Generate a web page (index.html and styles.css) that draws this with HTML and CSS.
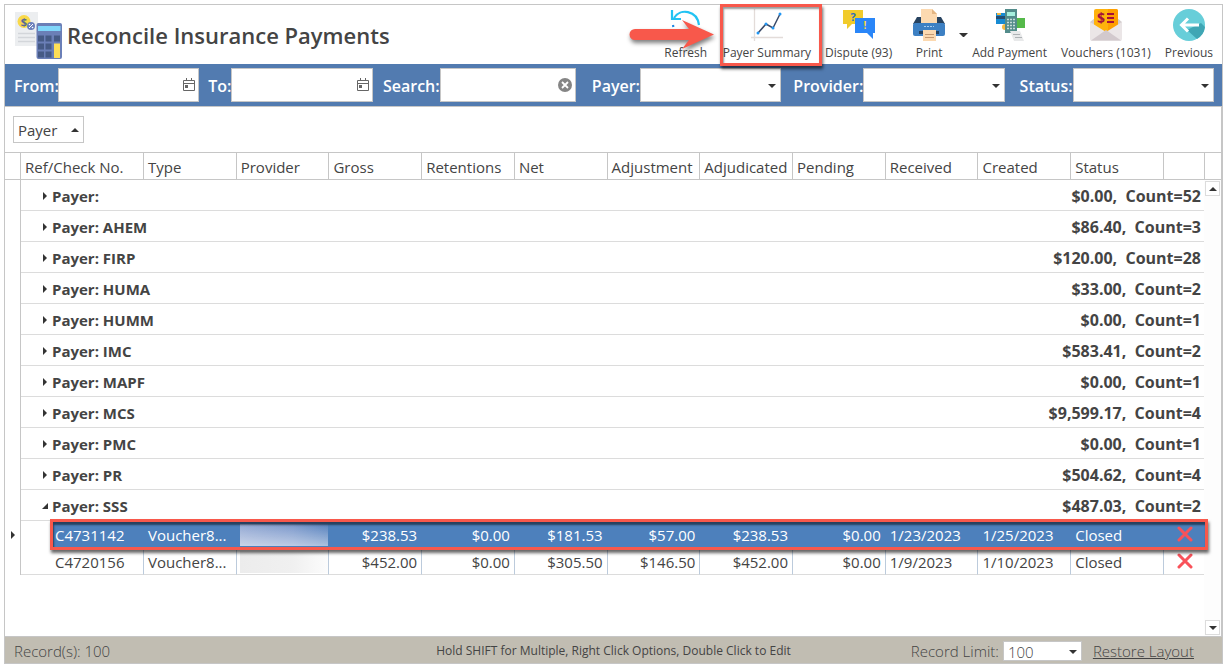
FILE: index.html
```
<!DOCTYPE html>
<html lang="en">
<head>
    <meta charset="UTF-8">
    <meta name="viewport" content="width=device-width, initial-scale=1.0">
    <title>Reconcile Insurance Payments</title>
    <link rel="stylesheet" href="styles.css">
</head>
<body>
    <div class="window">
        <header class="header">
            <svg class="title-icon" width="48" height="48" viewBox="0 0 48 48" aria-hidden="true">
                <rect x="1" y="1" width="23" height="34" fill="#eceef0"/>
                <path d="M4 22.500h17M4 26.500h17M4 30.500h17" stroke="#d3d6da" stroke-width="1.500"/>
                <circle cx="10" cy="10.500" r="6.500" fill="#f9d949"/>
                <text x="10" y="14.500" font-size="11" text-anchor="middle" class="glyph" fill="#5a6a96">$</text>
                <circle cx="17" cy="15" r="4" fill="#6c80ba"/>
                <path d="M15 17l4-4" stroke="#fff"/>
                <circle cx="15.500" cy="13.500" r="0.800" fill="#fff"/>
                <circle cx="18.500" cy="16.500" r="0.800" fill="#fff"/>
                <rect x="22.500" y="12" width="25.500" height="36" rx="2" fill="#6b7fb7"/>
                <rect x="24" y="15" width="22.500" height="5" fill="#80d6fa"/>
                <path d="M24 24.500h6v6h-6zM31.500 24.500h6v6h-6zM40 24.500h6v6h-6zM24 32.500h6v6h-6zM31.500 32.500h6v6h-6zM24 40.500h6v6h-6zM31.500 40.500h6v6h-6z" fill="#465a85"/>
                <rect x="40" y="32.500" width="6" height="14.500" fill="#ffdf57"/>
            </svg>
            <h1>Reconcile Insurance Payments</h1>

            <nav class="tools">
                <button type="button" class="tool">
                    <svg width="32" height="32" viewBox="0 0 32 32" aria-hidden="true">
                        <path d="M4 9C10-1 27 1 29 16" fill="none" stroke="#22c3f3" stroke-width="2.200"/>
                        <path d="M2 1v9h9" fill="none" stroke="#22c3f3" stroke-width="2.200"/>
                        <path d="M3 16C5 31 22 33 28 23" fill="none" stroke="#1e88e5" stroke-width="2.200" stroke-dasharray="2 3"/>
                    </svg>
                    <span>Refresh</span>
                    <svg class="arrow-mark" width="90" height="34" viewBox="0 0 90 34" aria-hidden="true">
                        <path d="M7 11H61L54 2L86 16.500L54 31L61 22H7A5.500 5.500 0 0 1 7 11Z" fill="#f8584b"/>
                    </svg>
                </button>
                <button type="button" class="tool marked">
                    <svg width="32" height="32" viewBox="0 0 32 32" aria-hidden="true">
                        <path d="M3.500 0v32M0 28.500h32" stroke="#e3dcd9" stroke-width="1.300"/>
                        <path d="M7 24l8-9 7 4 7-14" fill="none" stroke="#3a4a68" stroke-width="1.500"/>
                        <g fill="#2196f3"><circle cx="7" cy="24" r="1.500"/><circle cx="15" cy="15" r="1.500"/><circle cx="22" cy="19" r="1.500"/><circle cx="29" cy="5" r="1.500"/></g>
                    </svg>
                    <span>Payer Summary</span>
                </button>
                <button type="button" class="tool">
                    <svg width="32" height="32" viewBox="0 0 32 32" aria-hidden="true">
                        <path d="M0 1h20v14H9l-5 5v-5H0z" fill="#f1cb2b"/>
                        <text x="10" y="12" font-size="11" text-anchor="middle" class="glyph" fill="#2f6fb5">?</text>
                        <path d="M12 9h20v15h-2v6l-6-6H12z" fill="#2a86f8"/>
                        <text x="22" y="20" font-size="10" text-anchor="middle" class="glyph" fill="#f9d63c">!</text>
                    </svg>
                    <span>Dispute (93)</span>
                </button>
                <button type="button" class="tool">
                    <svg width="32" height="32" viewBox="0 0 32 32" aria-hidden="true">
                        <path d="M4 8h24l4 7H0z" fill="#27425f"/>
                        <path d="M8 0h11l5 5v10H8z" fill="#fcd9b0"/>
                        <path d="M19 0v5h5z" fill="#e3b583"/>
                        <rect y="14" width="32" height="13" rx="2" fill="#3d80c3"/>
                        <path d="M11 17.500h10" stroke="#a9cdf0" stroke-dasharray="2 1"/>
                        <path d="M6 22h20v3H6z" fill="#27425f"/>
                        <path d="M10 21h13v11H10z" fill="#fcd9b0"/>
                        <path d="M12 25.500h9M12 28.500h9" stroke="#c69a72"/>
                    </svg>
                    <span>Print</span>
                </button>
                <button type="button" class="tool-more" aria-label="Print options"><i class="caret"></i></button>
                <button type="button" class="tool">
                    <svg width="32" height="32" viewBox="0 0 32 32" aria-hidden="true">
                        <path d="M2 4h14v11H2z" fill="#178bd3"/>
                        <path d="M2 7h14v3H2z" fill="#254d71"/>
                        <path d="M3 4h4v2H3z" fill="#f5b942"/>
                        <circle cx="11" cy="18" r="3" fill="#f5b942"/>
                        <path d="M18 9h13v10H18z" fill="#55b94a"/>
                        <path d="M11 0h12v24H11z" fill="#538c8b"/>
                        <path d="M13 3h8v4h-8z" fill="#a6efdd"/>
                        <path d="M13 10.500h8M13 13.500h8M13 16.500h8M13 19.500h8" stroke="#c9dcda" stroke-width="1.500" stroke-dasharray="2 1"/>
                        <path d="M16 22h10l4 10H20z" fill="#e8e9ea"/>
                        <path d="M19 25.500h7M21 28.500h7" stroke="#aeb2b5"/>
                    </svg>
                    <span>Add Payment</span>
                </button>
                <button type="button" class="tool">
                    <svg width="32" height="32" viewBox="0 0 32 32" aria-hidden="true">
                        <path d="M0 13L5 9h22l5 4v8H0z" fill="#d6cfd0"/>
                        <path d="M4 2q0-2 2-2h20q2 0 2 2v18L16 25L4 18z" fill="#ffb20c"/>
                        <path d="M18 0h8q2 0 2 2v18l-10 4z" fill="#ff9f00"/>
                        <text x="11" y="14" font-size="14" text-anchor="middle" class="glyph" fill="#a5103c">$</text>
                        <path d="M17 5h7M17 9h7M17 13h7" stroke="#a5103c" stroke-width="2"/>
                        <path d="M0 13L16 23L32 13v17q0 2-2 2H2q-2 0-2-2z" fill="#ebe6e7"/>
                        <path d="M1 31.500L16 21L31 31.500z" fill="#d2c9cd"/>
                    </svg>
                    <span>Vouchers (1031)</span>
                </button>
                <button type="button" class="tool">
                    <svg width="32" height="32" viewBox="0 0 32 32" aria-hidden="true">
                        <circle cx="16" cy="16" r="16" fill="#67ced9"/>
                        <path d="M14 21L24 30A16 16 0 0 0 32 18L28 14z" fill="#3fa6b4"/>
                        <path d="M26 16H9M15 9.500L8.500 16L15 22.500" fill="none" stroke="#fff" stroke-width="3"/>
                    </svg>
                    <span>Previous</span>
                </button>
            </nav>
        </header>

        <form class="filters">
            <label for="from">From:</label>
            <div class="field">
                <input type="text" id="from">
                <svg class="field-icon" width="12" height="14" viewBox="0 0 12 14" aria-hidden="true">
                    <path d="M0.500 2.500h11v10H0.500zM0.500 5.500h11M3.500 0v3M8.500 0v3" fill="none" stroke="#666"/>
                    <path d="M2 7h3v3H2z" fill="#666"/>
                </svg>
            </div>
            <label for="to">To:</label>
            <div class="field">
                <input type="text" id="to">
                <svg class="field-icon" width="12" height="14" viewBox="0 0 12 14" aria-hidden="true">
                    <path d="M0.500 2.500h11v10H0.500zM0.500 5.500h11M3.500 0v3M8.500 0v3" fill="none" stroke="#666"/>
                    <path d="M2 7h3v3H2z" fill="#666"/>
                </svg>
            </div>
            <label for="search">Search:</label>
            <div class="field">
                <input type="text" id="search">
                <svg class="field-icon" width="14" height="14" viewBox="0 0 14 14" aria-hidden="true">
                    <circle cx="7" cy="7" r="7" fill="#858585"/>
                    <path d="M4 4l6 6M10 4l-6 6" stroke="#fff" stroke-width="1.800"/>
                </svg>
            </div>
            <label for="payer">Payer:</label>
            <div class="field">
                <select id="payer"><option></option></select>
                <i class="caret"></i>
            </div>
            <label for="provider">Provider:</label>
            <div class="field">
                <select id="provider"><option></option></select>
                <i class="caret"></i>
            </div>
            <label for="status">Status:</label>
            <div class="field">
                <select id="status"><option></option></select>
                <i class="caret"></i>
            </div>
        </form>

        <main class="grid">
            <div class="group-panel">
                <button type="button" class="group-chip">Payer <i class="caret up"></i></button>
            </div>
            <div class="grid-body">
                <table>
                    <colgroup>
                        <col class="col-mark"><col class="col-indent"><col class="col-ref">
                        <col><col><col><col><col><col><col><col><col><col><col>
                        <col class="col-delete"><col class="col-scroll">
                    </colgroup>
                    <thead>
                        <tr>
                            <th></th>
                            <th colspan="2">Ref/Check No.</th>
                            <th>Type</th>
                            <th>Provider</th>
                            <th>Gross</th>
                            <th>Retentions</th>
                            <th>Net</th>
                            <th>Adjustment</th>
                            <th>Adjudicated</th>
                            <th>Pending</th>
                            <th>Received</th>
                            <th>Created</th>
                            <th>Status</th>
                            <th></th>
                            <th></th>
                        </tr>
                    </thead>
                    <tbody>
                        <tr class="group"><td class="mark"></td><td colspan="14"><div><i class="expander"></i><span>Payer:</span><span class="sum">$0.00,&nbsp; Count=52</span></div></td><td></td></tr>
                        <tr class="group"><td class="mark"></td><td colspan="14"><div><i class="expander"></i><span>Payer: AHEM</span><span class="sum">$86.40,&nbsp; Count=3</span></div></td><td></td></tr>
                        <tr class="group"><td class="mark"></td><td colspan="14"><div><i class="expander"></i><span>Payer: FIRP</span><span class="sum">$120.00,&nbsp; Count=28</span></div></td><td></td></tr>
                        <tr class="group"><td class="mark"></td><td colspan="14"><div><i class="expander"></i><span>Payer: HUMA</span><span class="sum">$33.00,&nbsp; Count=2</span></div></td><td></td></tr>
                        <tr class="group"><td class="mark"></td><td colspan="14"><div><i class="expander"></i><span>Payer: HUMM</span><span class="sum">$0.00,&nbsp; Count=1</span></div></td><td></td></tr>
                        <tr class="group"><td class="mark"></td><td colspan="14"><div><i class="expander"></i><span>Payer: IMC</span><span class="sum">$583.41,&nbsp; Count=2</span></div></td><td></td></tr>
                        <tr class="group"><td class="mark"></td><td colspan="14"><div><i class="expander"></i><span>Payer: MAPF</span><span class="sum">$0.00,&nbsp; Count=1</span></div></td><td></td></tr>
                        <tr class="group"><td class="mark"></td><td colspan="14"><div><i class="expander"></i><span>Payer: MCS</span><span class="sum">$9,599.17,&nbsp; Count=4</span></div></td><td></td></tr>
                        <tr class="group"><td class="mark"></td><td colspan="14"><div><i class="expander"></i><span>Payer: PMC</span><span class="sum">$0.00,&nbsp; Count=1</span></div></td><td></td></tr>
                        <tr class="group"><td class="mark"></td><td colspan="14"><div><i class="expander"></i><span>Payer: PR</span><span class="sum">$504.62,&nbsp; Count=4</span></div></td><td></td></tr>
                        <tr class="group"><td class="mark"></td><td colspan="14"><div><i class="expander open"></i><span>Payer: SSS</span><span class="sum">$487.03,&nbsp; Count=2</span></div></td><td></td></tr>
                        <tr class="record selected">
                            <td class="mark"><i class="expander"></i></td>
                            <td class="indent"></td>
                            <td class="ref">C4731142</td>
                            <td>Voucher8...</td>
                            <td class="provider"><div class="masked"></div></td>
                            <td class="num">$238.53</td>
                            <td class="num">$0.00</td>
                            <td class="num">$181.53</td>
                            <td class="num">$57.00</td>
                            <td class="num">$238.53</td>
                            <td class="num">$0.00</td>
                            <td>1/23/2023</td>
                            <td>1/25/2023</td>
                            <td>Closed</td>
                            <td class="delete">
                                <button type="button" aria-label="Delete C4731142"><svg width="16" height="16" viewBox="0 0 16 16"><path d="M2 2l12 12M14 2L2 14" stroke="#f9525a" stroke-width="3" stroke-linecap="round"/></svg></button>
                            </td>
                            <td class="last"><span class="row-frame"></span></td>
                        </tr>
                        <tr class="record">
                            <td class="mark"></td>
                            <td class="indent"></td>
                            <td class="ref">C4720156</td>
                            <td>Voucher8...</td>
                            <td class="provider"><div class="masked"></div></td>
                            <td class="num">$452.00</td>
                            <td class="num">$0.00</td>
                            <td class="num">$305.50</td>
                            <td class="num">$146.50</td>
                            <td class="num">$452.00</td>
                            <td class="num">$0.00</td>
                            <td>1/9/2023</td>
                            <td>1/10/2023</td>
                            <td>Closed</td>
                            <td class="delete">
                                <button type="button" aria-label="Delete C4720156"><svg width="16" height="16" viewBox="0 0 16 16"><path d="M2 2l12 12M14 2L2 14" stroke="#f9525a" stroke-width="3" stroke-linecap="round"/></svg></button>
                            </td>
                            <td class="last"></td>
                        </tr>
                    </tbody>
                </table>
                <div class="scrollbar">
                    <button type="button" aria-label="Scroll up"><i class="caret up"></i></button>
                    <button type="button" aria-label="Scroll down"><i class="caret"></i></button>
                </div>
            </div>
        </main>

        <footer class="footer">
            <span class="light">Record(s): 100</span>
            <span class="hint">Hold SHIFT for Multiple, Right Click Options, Double Click to Edit</span>
            <div class="footer-right light">
                <label for="limit">Record Limit:</label>
                <div class="field">
                    <select id="limit"><option>100</option></select>
                    <i class="caret"></i>
                </div>
                <a href="#">Restore Layout</a>
            </div>
        </footer>
    </div>
</body>
</html>
```
FILE: styles.css
```
* {
    margin: 0;
    padding: 0;
    box-sizing: border-box;
}

body {
    font-family: "Open Sans", "Noto Sans", sans-serif;
    font-size: 15px;
    line-height: 20px;
    color: #444;
    background: #fff;
}

button, input, select {
    font: inherit;
    color: inherit;
}

button {
    background: none;
    border: none;
    cursor: pointer;
}

.glyph {
    font-family: "Open Sans", sans-serif;
    font-weight: 700;
}

.window {
    display: flex;
    flex-direction: column;
    min-height: calc(100vh - 9px);
    margin: 4px 8px 5px 4px;
    border: 1px solid #c6c6c6;
}

/* small triangles */
.caret {
    display: block;
    border: 4px solid transparent;
    border-top-color: #333;
    border-bottom: none;
}

.caret.up {
    border-top: none;
    border-bottom: 4px solid #333;
}

.expander {
    display: block;
    border: 4px solid transparent;
    border-left-color: #333;
    border-right: none;
}

.expander.open {
    border: 3px solid #333;
    border-top-color: transparent;
    border-left-color: transparent;
}

/* header */
.header {
    display: flex;
    align-items: center;
    height: 59px;
    padding: 0 2px 0 9px;
}

.title-icon {
    flex: none;
}

h1 {
    margin-left: 5px;
    font-size: 22px;
    line-height: 32px;
    font-weight: 600;
    white-space: nowrap;
}

.tools {
    display: flex;
    align-self: stretch;
    margin-left: auto;
}

.tool {
    position: relative;
    display: flex;
    flex-direction: column;
    align-items: center;
    min-width: 60px;
    padding: 4px 7px 0;
    font-size: 12px;
    white-space: nowrap;
}

.tool span {
    margin-top: 2px;
}

.tool-more {
    width: 9px;
    margin-right: -3px;
}

.arrow-mark {
    position: absolute;
    top: 13px;
    left: -28px;
    filter: drop-shadow(1px 3px 2px rgba(0,0,0,0.5));
}

.marked::after {
    content: "";
    position: absolute;
    z-index: 2;
    inset: -1px -4px -2px 4px;
    border: 3px solid #f8584b;
    box-shadow: 1px 3px 3px rgba(0,0,0,0.6), inset 1px 2px 2px rgba(0,0,0,0.4);
}

/* filter bar */
.filters {
    display: grid;
    grid-template-columns: 44px 141fr 32px 141fr 67px 136fr 64px 141fr 82px 141fr 68px 141fr;
    align-items: center;
    height: 43px;
    padding: 0 8px 0 9px;
    background: #527bb0;
    border-bottom: 1px solid #c6c6c6;
}

.filters label {
    padding-top: 2px;
    font-size: 16px;
    font-weight: 600;
    color: #fff;
    text-align: right;
    white-space: nowrap;
}

.field {
    position: relative;
    height: 34px;
}

.field input,
.field select {
    display: block;
    width: 100%;
    height: 100%;
    padding: 0 4px;
    background: #fff;
    border: 1px solid #c6c6c6;
    border-radius: 0;
    appearance: none;
}

.field-icon {
    position: absolute;
    top: 10px;
    right: 4px;
}

.field .caret {
    position: absolute;
    top: calc(50% - 1px);
    right: 5px;
    pointer-events: none;
}

/* grid */
.grid {
    display: flex;
    flex-direction: column;
    flex: 1;
    border-left: 1px solid #c6c6c6;
    margin-left: -1px;
    border-right: 1px solid #c6c6c6;
}

.group-panel {
    padding: 9px 8px;
}

.group-chip {
    display: flex;
    align-items: center;
    gap: 14px;
    height: 27px;
    padding: 0 4px;
    border: 1px solid #c6c6c6;
}

.grid-body {
    position: relative;
    flex: 1;
}

table {
    width: 100%;
    table-layout: fixed;
    border-collapse: separate;
    border-spacing: 0;
}

.col-mark { width: 16px; }
.col-indent { width: 31px; }
.col-ref { width: 92px; }
.col-delete { width: 41px; }
.col-scroll { width: 16px; }

th {
    height: 28px;
    padding: 2px 0 0 4px;
    font-weight: 400;
    text-align: left;
    white-space: nowrap;
    border: 1px solid #c6c6c6;
    border-left: none;
}

th:last-child {
    border-right: none;
}

td {
    white-space: nowrap;
}

.mark {
    border-right: 1px solid #c6c6c6;
}

.mark .expander {
    margin-left: 6px;
}

.group td:nth-child(2) {
    height: 31px;
    border-bottom: 1px solid #dcdcdc;
}

.group div {
    display: flex;
    align-items: center;
    padding: 2px 4px 0 22px;
    font-weight: 700;
}

.group .expander {
    width: 4px;
    margin-right: 5px;
}

.group .expander.open {
    width: 6px;
    margin: 0 4px 0 -1px;
}

.sum {
    margin-left: auto;
    font-size: 16px;
}

.record {
    position: relative;
}

.record td {
    height: 27px;
    padding: 2px 4px 0;
    border-right: 1px solid #bccbdc;
    border-bottom: 1px solid #dcdcdc;
}

.record .mark {
    padding: 0;
    border-right-color: #c6c6c6;
    border-bottom: none;
}

.record .indent,
.record .delete {
    border-right: none;
}

.record .ref {
    padding-left: 3px;
}

.record .num {
    text-align: right;
}

.record .last {
    border: none;
}

.record .delete {
    padding: 0;
    text-align: center;
}

.delete button {
    display: block;
    margin: 0 auto;
    height: 16px;
}

.record .provider {
    padding: 2px 0 0 3px;
}

.masked {
    height: 22px;
    background: linear-gradient(90deg, #ececec, #f0f0f0 60%, #fcfcfc);
}

.selected {
    z-index: 1;
    color: #fff;
}

.selected td {
    background: #4d80bc;
    border-color: #4d80bc;
}

.selected .mark,
.selected .indent,
.selected .last {
    background: none;
}

.selected .indent {
    border-bottom: none;
}

.selected .masked {
    background: linear-gradient(180deg, rgba(255,255,255,0), rgba(255,255,255,0.5)), linear-gradient(90deg, #94a9d3, #7b98cb 60%, #5782be);
}

.row-frame {
    position: absolute;
    inset: -2px 13px -2px 45px;
    border: 3px solid #f8584b;
    box-shadow: 1px 3px 3px rgba(0,0,0,0.6), inset 1px 3px 2px rgba(0,0,0,0.5);
}

.scrollbar {
    position: absolute;
    top: 28px;
    right: 0;
    bottom: 0;
    display: flex;
    flex-direction: column;
    justify-content: space-between;
    width: 17px;
    padding: 1px;
    background: #fdfdfd;
}

.scrollbar button {
    display: grid;
    place-items: center;
    width: 15px;
    height: 15px;
    background: #fff;
    border: 1px solid #dcdcdc;
}

/* footer */
.footer {
    display: grid;
    grid-template-columns: 1fr auto 1fr;
    align-items: center;
    height: 27px;
    padding: 1px 9px 0;
    background: #c1bdb2;
    border-top: 1px solid #c6c6c6;
}

.light {
    font-weight: 300;
    white-space: nowrap;
}

.hint {
    font-size: 12px;
}

.footer-right {
    display: flex;
    align-items: center;
    justify-content: flex-end;
    padding-right: 19px;
}

.footer-right .field {
    width: 79px;
    height: 20px;
    margin: 0 11px 0 4px;
}

.footer-right a {
    color: inherit;
}
```
